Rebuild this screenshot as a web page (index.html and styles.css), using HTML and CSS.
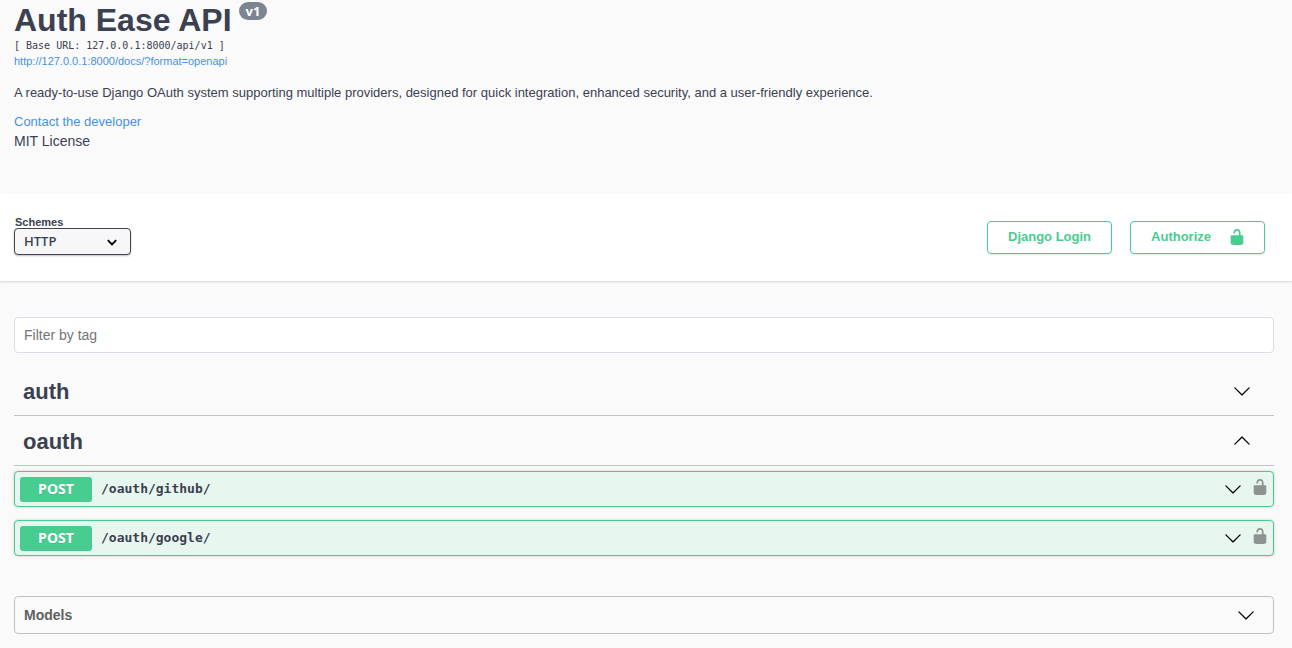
FILE: index.html
```html
<!DOCTYPE html>
<html lang="en">
<head>
<meta charset="utf-8">
<meta name="viewport" content="width=device-width, initial-scale=1">
<title>Auth Ease API</title>
<link rel="stylesheet" href="styles.css">
</head>
<body>
<svg class="sprite" aria-hidden="true">
  <symbol id="chevron" viewBox="0 0 20 20"><path d="M17.418 6.109c.272-.268.709-.268.979 0s.271.701 0 .969l-7.908 7.83c-.27.268-.707.268-.979 0l-7.908-7.83c-.27-.268-.27-.701 0-.969.271-.268.709-.268.979 0L10 13.25l7.418-7.141z"/></symbol>
  <symbol id="unlocked" viewBox="0 0 20 20"><path d="M15.8 8H14V5.6C14 2.703 12.665 1 10 1 7.334 1 6 2.703 6 5.6V6h2v-.801C8 3.754 8.797 3 10 3c1.203 0 2 .754 2 2.199V8H4c-.553 0-1 .646-1 1.199V17c0 .549.428 1.139.951 1.307l1.197.387C5.672 18.861 6.55 19 7.1 19h5.8c.549 0 1.428-.139 1.951-.307l1.196-.387c.524-.167.953-.757.953-1.306V9.199C17 8.646 16.352 8 15.8 8z"/></symbol>
</svg>
<header class="info">
  <div class="title-row"><h1 class="title">Auth Ease API</h1><span class="version">v1</span></div>
  <p class="base-url">[ Base URL: 127.0.0.1:8000/api/v1 ]</p>
  <a class="spec-link" href="#spec">http://127.0.0.1:8000/docs/?format=openapi</a>
  <p class="description">A ready-to-use Django OAuth system supporting multiple providers, designed for quick integration, enhanced security, and a user-friendly experience.</p>
  <a class="contact" href="#contact">Contact the developer</a>
  <p class="license">MIT License</p>
</header>
<section class="scheme-bar">
  <div class="schemes">
    <label class="schemes-label" for="scheme">Schemes</label>
    <div class="select-wrap">
      <select class="scheme-select" id="scheme"><option>HTTP</option></select>
      <svg class="select-arrow" viewBox="0 0 20 20" aria-hidden="true"><path d="M3 7l7 7 7-7" /></svg>
    </div>
  </div>
  <div class="auth-buttons">
    <button class="btn" type="button">Django Login</button>
    <button class="btn btn-authorize" type="button"><span>Authorize</span><svg class="icon" aria-hidden="true"><use href="#unlocked"/></svg></button>
  </div>
</section>
<main class="content">
  <input class="filter" type="text" placeholder="Filter by tag" aria-label="Filter by tag">
  <section>
    <h2 class="tag"><button class="tag-button" type="button" aria-expanded="false"><span class="tag-name">auth</span><svg class="icon" aria-hidden="true"><use href="#chevron"/></svg></button></h2>
  </section>
  <section>
    <h2 class="tag"><button class="tag-button" type="button" aria-expanded="true"><span class="tag-name">oauth</span><svg class="icon icon-up" aria-hidden="true"><use href="#chevron"/></svg></button></h2>
    <div class="operations">
      <div class="operation">
        <button class="op-summary" type="button"><span class="method">POST</span><span class="path">/oauth/github/</span><svg class="icon" aria-hidden="true"><use href="#chevron"/></svg></button>
        <button class="op-lock" type="button" aria-label="Authorize /oauth/github/"><svg class="icon" aria-hidden="true"><use href="#unlocked"/></svg></button>
      </div>
      <div class="operation">
        <button class="op-summary" type="button"><span class="method">POST</span><span class="path">/oauth/google/</span><svg class="icon" aria-hidden="true"><use href="#chevron"/></svg></button>
        <button class="op-lock" type="button" aria-label="Authorize /oauth/google/"><svg class="icon" aria-hidden="true"><use href="#unlocked"/></svg></button>
      </div>
    </div>
  </section>
  <section class="models">
    <button class="models-button" type="button">Models<svg class="icon" aria-hidden="true"><use href="#chevron"/></svg></button>
  </section>
</main>
</body>
</html>
```
FILE: styles.css
```css
* { box-sizing: border-box; }
body {
  margin: 0;
  background: #fafafa;
  color: #3b4151;
  font-family: "Liberation Sans", Arial, sans-serif;
}
h1, h2, p { margin: 0; }
a { color: #4990e2; text-decoration: none; }
button { font-family: inherit; color: inherit; cursor: pointer; }
.sprite { display: none; }
.icon { width: 18px; height: 18px; flex: none; fill: currentColor; }
.icon-up { transform: rotate(180deg); }

.info {
  display: flex;
  flex-direction: column;
  align-items: flex-start;
  padding: 2px 14px 43px;
}
.title-row { display: flex; align-items: flex-start; gap: 7px; }
.title { font-size: 32px; line-height: 36px; }
.version {
  padding: 0 7px;
  border-radius: 9px;
  background: #7d8492;
  color: #fff;
  font: bold 13px/18px "Open Sans", sans-serif;
}
.base-url { font: 10px/15px "DejaVu Sans Mono", monospace; }
.spec-link { font-size: 11px; line-height: 17px; }
.description { margin-top: 13px; font-size: 13px; line-height: 20px; }
.contact { margin-top: 10px; font-size: 13px; line-height: 18px; }
.license { font-size: 14px; line-height: 20px; }

.scheme-bar {
  display: flex;
  justify-content: space-between;
  align-items: flex-start;
  padding: 22px 27px 26px 14px;
  background: #fff;
  box-shadow: 0 1px 2px rgba(0, 0, 0, .15);
}
.schemes { display: flex; flex-direction: column; }
.schemes-label { padding-left: 1px; font-size: 11px; font-weight: bold; line-height: 12px; }
.select-wrap { display: grid; align-items: center; }
.scheme-select {
  grid-area: 1 / 1;
  appearance: none;
  width: 117px;
  height: 27px;
  padding: 0 30px 2px 9px;
  border: 1px solid #41444e;
  border-radius: 4px;
  background: #f7f7f7;
  box-shadow: 0 1px 2px rgba(0, 0, 0, .25);
  color: #3b4151;
  font: 600 13px "Open Sans", sans-serif;
}
.select-arrow {
  grid-area: 1 / 1;
  justify-self: end;
  width: 12px;
  height: 12px;
  margin-right: 13px;
  fill: none;
  stroke: #000;
  stroke-width: 3;
  pointer-events: none;
}
.auth-buttons { display: flex; gap: 18px; padding-top: 5px; }
.btn {
  height: 33px;
  padding: 0 20px 2px;
  border: 1px solid #49cc90;
  border-radius: 4px;
  background: transparent;
  box-shadow: 0 1px 2px rgba(0, 0, 0, .1);
  color: #49cc90;
  font-size: 13px;
  font-weight: bold;
}
.btn-authorize { display: flex; align-items: center; gap: 17px; padding-right: 18px; }

.content { padding: 36px 18px 14px 14px; }
.filter {
  display: block;
  width: 100%;
  height: 36px;
  margin-bottom: 13px;
  padding: 0 9px;
  border: 1px solid #d8dde7;
  border-radius: 4px;
  background: #fff;
  font: 14px "Liberation Sans", Arial, sans-serif;
  color: #3b4151;
}
.filter::placeholder { color: #757575; }
.tag { border-bottom: 1px solid #bfc1c4; }
.tag-button {
  display: flex;
  align-items: center;
  justify-content: space-between;
  width: 100%;
  height: 49px;
  padding: 0 23px 0 9px;
  border: 0;
  background: none;
  font-size: 22px;
  font-weight: bold;
}
.tag-name { padding-top: 3px; }
.tag-button .icon, .op-summary .icon, .models-button .icon { fill: #000; }
.operations { display: grid; gap: 13px; padding-top: 5px; }
.operation {
  display: flex;
  align-items: center;
  height: 36px;
  padding: 0 4px 0 5px;
  border: 1px solid #49cc90;
  border-radius: 4px;
  background: #e8f6f0;
  box-shadow: 0 0 3px rgba(0, 0, 0, .19);
}
.op-summary {
  display: flex;
  flex: 1;
  align-items: center;
  padding: 0;
  border: 0;
  background: none;
  text-align: left;
}
.method {
  height: 25px;
  width: 72px;
  border-radius: 3px;
  background: #49cc90;
  color: #fff;
  font: bold 14px/24px "Open Sans", sans-serif;
  text-align: center;
  text-shadow: 0 1px 0 rgba(0, 0, 0, .1);
}
.path { flex: 1; padding-left: 9px; font: bold 13px/18px "DejaVu Sans Mono", monospace; }
.op-lock {
  display: flex;
  padding: 0 0 4px;
  margin-left: 9px;
  border: 0;
  background: none;
  color: #8b9490;
}
.models { margin-top: 40px; border: 1px solid #bfc1c4; border-radius: 4px; }
.models-button {
  display: flex;
  align-items: center;
  justify-content: space-between;
  width: 100%;
  height: 36px;
  padding: 0 18px 0 9px;
  border: 0;
  background: none;
  color: #606060;
  font-size: 14px;
  font-weight: bold;
}
```
